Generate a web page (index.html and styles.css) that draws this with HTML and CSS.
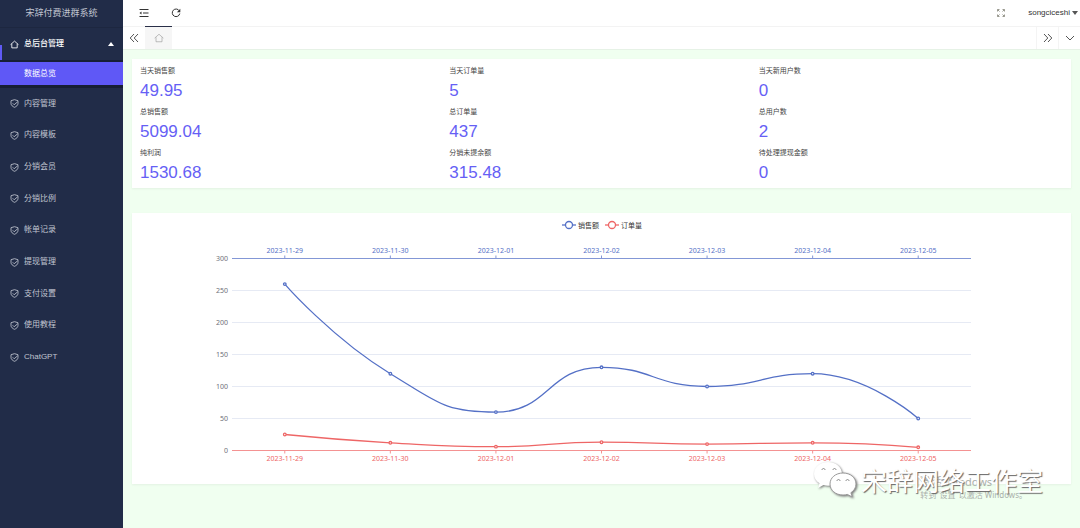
FILE: index.html
```html
<!DOCTYPE html>
<html lang="zh-CN">
<head>
<meta charset="utf-8">
<meta name="viewport" content="width=device-width, initial-scale=1">
<title>宋辞付费进群系统</title>
<link rel="stylesheet" href="styles.css">
</head>
<body>
<svg class="defs" aria-hidden="true">
  <symbol id="home" viewBox="0 0 16 16"><path d="M1 8.2 8 2l7 6.2M3.2 6.8V14h9.6V6.8" /></symbol>
  <symbol id="shield" viewBox="0 0 16 16"><path d="M8 1.2 14.2 3v5c0 3.300-3.200 5.500-6.200 6.800C5 13.500 1.800 11.300 1.800 8V3zM4.800 7.600 7.400 10.200 13.500 5" /></symbol>
</svg>
<div class="app">
  <aside class="sidebar">
    <h1 class="brand">宋辞付费进群系统</h1>
    <nav>
      <button class="group" type="button" aria-expanded="true"><svg class="icon"><use href="#home"/></svg>总后台管理<span class="caret-up"></span></button>
      <div class="submenu"><a class="sub-link" href="#">数据总览</a></div>
      <div class="menu">
        <a class="menu-link" href="#"><svg class="icon"><use href="#shield"/></svg>内容管理</a>
        <a class="menu-link" href="#"><svg class="icon"><use href="#shield"/></svg>内容模板</a>
        <a class="menu-link" href="#"><svg class="icon"><use href="#shield"/></svg>分销会员</a>
        <a class="menu-link" href="#"><svg class="icon"><use href="#shield"/></svg>分销比例</a>
        <a class="menu-link" href="#"><svg class="icon"><use href="#shield"/></svg>帐单记录</a>
        <a class="menu-link" href="#"><svg class="icon"><use href="#shield"/></svg>提现管理</a>
        <a class="menu-link" href="#"><svg class="icon"><use href="#shield"/></svg>支付设置</a>
        <a class="menu-link" href="#"><svg class="icon"><use href="#shield"/></svg>使用教程</a>
        <a class="menu-link" href="#"><svg class="icon"><use href="#shield"/></svg>ChatGPT</a>
      </div>
    </nav>
  </aside>
  <div class="main">
    <header class="topbar">
      <button class="tool" type="button" aria-label="收起菜单"><svg class="tool-icon" viewBox="0 0 10 10"><path d="M.5 1.500h9M4 5h5.500M.5 8.500h9"/><path class="solid" d="M.5 5 2.500 3.500v3z"/></svg></button>
      <button class="tool" type="button" aria-label="刷新"><svg class="tool-icon" viewBox="0 0 10 10"><path d="M8.300 2.800A3.800 3.800 0 1 0 8.800 5.600"/><path class="solid" d="M9.300.8v3.400H5.900z"/></svg></button>
      <button class="tool fullscreen" type="button" aria-label="全屏"><svg class="tool-icon" viewBox="0 0 10 10"><path d="M1.500 3.500v-2h2M1.500 1.500l2 2M6.500 1.500h2v2M8.500 1.500l-2 2M1.500 6.500v2h2M1.500 8.500l2-2M8.500 6.500v2h-2M8.500 8.500l-2-2"/></svg></button>
      <button class="user" type="button">songciceshi<span class="caret-down"></span></button>
    </header>
    <div class="tabs">
      <button class="tab-btn" type="button" aria-label="向左"><svg class="tool-icon" viewBox="0 0 10 10"><path d="M5 1 1.200 5 5 9M9 1 5.200 5 9 9"/></svg></button>
      <button class="tab-home" type="button" aria-label="首页"><svg class="tool-icon"><use href="#home"/></svg></button>
      <button class="tab-btn next" type="button" aria-label="向右"><svg class="tool-icon" viewBox="0 0 10 10"><path d="M1 1l3.800 4L1 9M5 1l3.800 4L5 9"/></svg></button>
      <button class="tab-btn ruled" type="button" aria-label="更多"><svg class="tool-icon" viewBox="0 0 10 10"><path d="M1 3l4 4 4-4"/></svg></button>
    </div>
    <main class="content">
      <dl class="card stats">
        <div><dt>当天销售额</dt><dd>49.95</dd></div>
        <div><dt>当天订单量</dt><dd>5</dd></div>
        <div><dt>当天新用户数</dt><dd>0</dd></div>
        <div><dt>总销售额</dt><dd>5099.04</dd></div>
        <div><dt>总订单量</dt><dd>437</dd></div>
        <div><dt>总用户数</dt><dd>2</dd></div>
        <div><dt>纯利润</dt><dd>1530.68</dd></div>
        <div><dt>分销未提余额</dt><dd>315.48</dd></div>
        <div><dt>待处理提现金额</dt><dd>0</dd></div>
      </dl>
      <section class="card">
        <svg class="chart" id="chart" viewBox="0 0 939 271" role="img" aria-label="销售额与订单量">
          <g class="blue"><path class="line" d="M430 12h14"/><circle class="dot" cx="437" cy="12" r="3.500"/></g>
          <text class="legend" x="446" y="15">销售额</text>
          <g class="red"><path class="line" d="M473 12h14"/><circle class="dot" cx="480" cy="12" r="3.500"/></g>
          <text class="legend" x="489" y="15">订单量</text>
        </svg>
      </section>
    </main>
  </div>
</div>
<div class="activate"><p class="activate-title">激活 Windows</p><p>转到"设置"以激活 Windows。</p></div>
<div class="watermark">
  <svg class="wechat" viewBox="0 0 44 37">
    <path d="M15 1C7 1 1 6 1 13c0 4 2 7 5.500 9.200L5 27l5.500-3c1.500.5 3 .7 4.500.7 8 0 14-5 14-11.700S23 1 15 1z"/>
    <path class="front" d="M30 12c-7.500 0-13 4.800-13 11s5.500 11 13 11c1.500 0 3-.2 4.300-.6l5 2.600-1.400-4.300C41 29.800 43 26.700 43 23c0-6.200-5.500-11-13-11z"/>
    <path class="eye" d="M9 9c0-2 3-2 3 0M20 9c0-2 3-2 3 0M24 20c0-2 3-2 3 0M33 20c0-2 3-2 3 0"/>
  </svg>
  <span>宋辞网络工作室</span>
</div>
<script src="chart.js"></script>
</body>
</html>
```

FILE: styles.css
```css
* { box-sizing: border-box; }
body, h1, p, dl, dd { margin: 0; }
body {
  position: relative;
  min-height: 100vh;
  background: #f0fff0;
  color: #444;
  font: 8px/16px "Liberation Sans", "Noto Sans CJK SC", sans-serif;
}
button { margin: 0; padding: 0; border: 0; background: none; color: inherit; font: inherit; }
a { color: inherit; text-decoration: none; }
svg { fill: none; stroke: currentColor; }
.defs { position: absolute; width: 0; height: 0; }
.app { display: flex; min-height: 100vh; }

.sidebar { flex: 0 0 123px; background: #212c48; color: #c0c5d0; }
.brand { height: 28px; font-size: 9px; line-height: 27px; font-weight: 400; text-align: center; border-bottom: 1px solid #1d2740; }
.icon { flex: none; width: 9px; height: 9px; stroke-width: 1.5; }
.group, .menu-link { display: flex; align-items: center; gap: 5px; width: 100%; padding: 0 9px 0 10px; text-align: left; }
.group { height: 32px; color: #fff; font-weight: 500; background: linear-gradient(#5f5af6, #5f5af6) left bottom / 2px 15px no-repeat; }
.caret-up, .caret-down { border: 3px solid transparent; }
.caret-up { margin-left: auto; border-top: 0; border-bottom: 4px solid #fff; }
.submenu { padding: 2px 0 3px; background: #171f35; }
.sub-link { display: block; padding-left: 24px; line-height: 23px; background: #5f58f6; color: #fff; }
.menu { display: grid; grid-auto-rows: 1fr; height: 285px; }

.main { flex: 1; min-width: 0; }
.topbar { display: flex; align-items: center; height: 27px; padding: 0 2px 0 16px; gap: 22px; background: #fff; border-bottom: 1px solid #f3f3f3; color: #333; }
.tool { display: flex; }
.tool-icon { width: 10px; height: 10px; }
.solid { fill: currentColor; stroke: none; }
.fullscreen { margin-left: auto; color: #9a9a90; }
.user { display: flex; align-items: center; gap: 2px; }
.caret-down { border-bottom: 0; border-top: 4px solid #555; }
.tabs { display: flex; height: 23px; background: #fff; color: #555; border-bottom: 1px solid #e6f2e6; }
.tab-btn, .tab-home { display: flex; align-items: center; justify-content: center; width: 22px; }
.tab-home { width: 27px; background: #f6f6f6; color: #999; box-shadow: 0 -1px #292f48; }
.next { margin-left: auto; border-left: 1px solid #f4f4f4; }
.ruled { border-left: 1px solid #f4f4f4; }

.content { display: grid; gap: 25px; padding: 9px 9px 8px; }
.card { background: #fff; box-shadow: 0 1px 2px #e4f2e4; }
.stats { display: grid; grid-template-columns: repeat(3, 1fr); gap: 2px 5px; padding: 4px 8px; }
dt { font-size: 7px; line-height: 16px; }
dd { color: #665ff5; font-size: 17px; line-height: 23px; }

.chart { display: block; width: 100%; font-family: "Noto Sans", "Noto Sans CJK SC", sans-serif; font-size: 7px; }
.chart text { stroke: none; fill: currentColor; }
.legend { color: #333; }
.blue { color: #5470c6; }
.red { color: #ee6666; }
.value { color: #6e7079; text-anchor: end; }
.date { text-anchor: middle; }
.chart .grid { stroke: #e6eaf4; }
.axis { stroke: #8397d6; }
.red .axis { stroke: #f49292; }
.line { stroke-width: 1.3; }
.dot { fill: #fff; stroke-width: 1.3; }

.activate { position: absolute; right: 53px; bottom: 27px; color: #aab0aa; line-height: 13px; font-family: "Noto Sans", "Noto Sans CJK SC", sans-serif; }
.activate-title { font-size: 11px; }
.watermark { position: absolute; right: 37px; bottom: 30px; display: flex; align-items: center; gap: 4px; color: #fff; font: 26px/37px "Noto Sans CJK SC", sans-serif; text-shadow: 1px 1px 1px #666; }
.wechat { width: 44px; height: 37px; fill: #fff; stroke: none; filter: drop-shadow(1px 1px 1px #777); }
.front { stroke: #999; }
.wechat .eye { fill: none; stroke: #888; }
```

FILE: chart.js
```javascript
const svg = document.getElementById("chart");
const dates = ["2023-11-29", "2023-11-30", "2023-12-01", "2023-12-02", "2023-12-03", "2023-12-04", "2023-12-05"];
const sales = [260, 120, 60, 130, 100, 120, 50];
const orders = [25, 12, 6, 13, 10, 12, 5];
const left = 100, right = 839, top0 = 45.5, bottom = 237.5;
const step = (right - left) / dates.length;
const xAt = i => left + step * (i + 0.5);
const yAt = v => bottom - v / 300 * (bottom - top0);

function add(parent, tag, attrs, text) {
  const el = document.createElementNS("http://www.w3.org/2000/svg", tag);
  for (const key in attrs) el.setAttribute(key, attrs[key]);
  if (text !== undefined) el.textContent = text;
  parent.appendChild(el);
  return el;
}

const clamp = (v, a, b) => Math.max(Math.min(a, b), Math.min(Math.max(a, b), v));

function smoothPath(pts) {
  let d = `M${pts[0]}`, cp = pts[0];
  for (let i = 1; i < pts.length; i++) {
    const p = pts[i], prev = pts[i - 1], next = pts[i + 1];
    let before = p, after = p;
    if (next) {
      const a = Math.hypot(p[0] - prev[0], p[1] - prev[1]);
      const b = Math.hypot(next[0] - p[0], next[1] - p[1]);
      const ratio = b / (a + b);
      after = p.map((c, k) => clamp(c + (next[k] - prev[k]) * 0.5 * ratio, c, next[k]));
      before = p.map((c, k) => clamp(c - (after[k] - c) * a / b, c, prev[k]));
      after = p.map((c, k) => c + (c - before[k]) * b / a);
    }
    d += `C${cp} ${before} ${p}`;
    cp = after;
  }
  return d;
}

for (let v = 0; v <= 300; v += 50) {
  if (v > 0 && v < 300) add(svg, "path", { class: "grid", d: `M${left} ${yAt(v)}H${right}` });
  add(svg, "text", { class: "value", x: 96, y: yAt(v) + 2 }, v);
}

[["blue", sales, top0, -1], ["red", orders, bottom, 1]].forEach(([name, values, axisY, dir]) => {
  const g = add(svg, "g", { class: name });
  add(g, "path", { class: "axis", d: `M${left} ${axisY}H${right}` });
  dates.forEach((date, i) => {
    add(g, "path", { class: "axis", d: `M${xAt(i)} ${axisY}v${dir * 3}` });
    add(g, "text", { class: "date", x: xAt(i), y: axisY + (dir < 0 ? -6 : 10) }, date);
  });
  const pts = values.map((v, i) => [xAt(i), yAt(v)]);
  add(g, "path", { class: "line", d: smoothPath(pts) });
  pts.forEach(([cx, cy]) => add(g, "circle", { class: "dot", cx, cy, r: 1.3 }));
});
```
